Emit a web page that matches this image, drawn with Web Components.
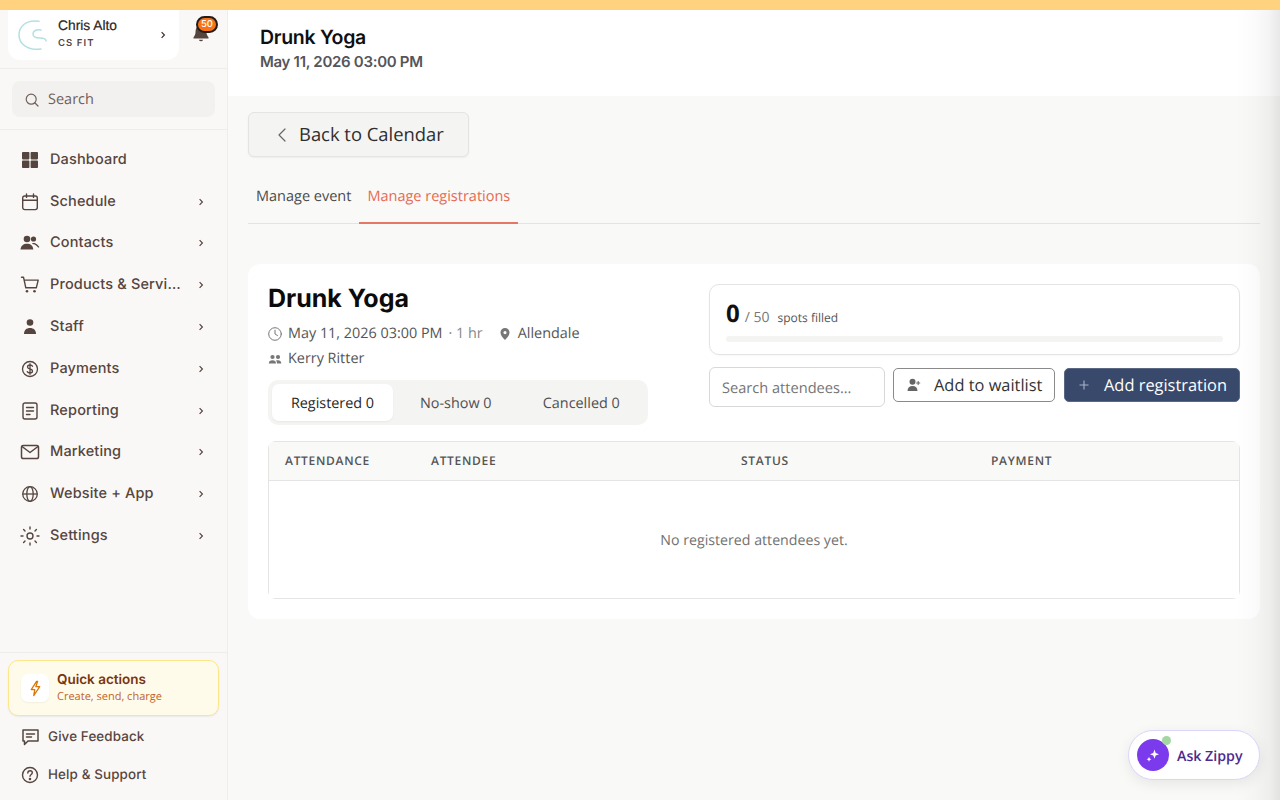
<!DOCTYPE html>
<html><head><meta charset="utf-8"><title>Drunk Yoga</title>
<style>
html,body{margin:0;height:100%;overflow:hidden;background:#f9f9f7;font-family:"Open Sans",sans-serif;text-rendering:geometricPrecision;-webkit-font-smoothing:antialiased}
app-shell{height:800px}
</style></head><body>
<app-shell>
  <side-bar slot="side"></side-bar>
  <page-header slot="head"></page-header>
  <event-page slot="main"></event-page>
  <ask-zippy slot="float"></ask-zippy>
</app-shell>
<script>
function def(name,html){customElements.define(name,class extends HTMLElement{
  connectedCallback(){ if(this.shadowRoot)return; const r=this.attachShadow({mode:'open'}); r.innerHTML=typeof html==='function'?html(this):html; }
});}
const chev=`<svg width="8" height="8" viewBox="0 0 8 8" fill="none" stroke="currentColor" stroke-width="1.2"><path d="M2.6 1.2 5.4 4 2.6 6.800"/></svg>`;

def('app-shell',`<style>
:host{display:grid;grid-template-columns:228px 1fr;grid-template-rows:86px 1fr;width:1280px;height:800px;padding-top:10px;box-sizing:border-box;position:relative;overflow:hidden}
.bar{position:absolute;left:0;right:0;top:0;height:10px;background:#ffd27f;z-index:3}
.side{grid-row:1/3;margin-top:-10px;display:flex;min-height:0}
.head{grid-column:2}
.main{grid-column:2;min-height:0}
.fade{position:absolute;right:0;top:10px;bottom:0;width:44px;background:linear-gradient(90deg,rgba(0,0,0,0),rgba(0,0,0,.015) 40%,rgba(0,0,0,.045) 75%,rgba(0,0,0,.09));pointer-events:none;z-index:1}
.float{position:absolute;right:20px;bottom:20px;z-index:2}
</style><div class="bar"></div><div class="side"><slot name="side"></slot></div><div class="head"><slot name="head"></slot></div><div class="main"><slot name="main"></slot></div><div class="fade"></div><div class="float"><slot name="float"></slot></div>`);

def('nav-item',el=>`<style>
:host{display:flex;align-items:center;height:41.8px;padding:0 20px;color:#56453f;font:450 14.5px/20px Inter,sans-serif;letter-spacing:.15px}
.i{width:20px;height:20px;margin-right:10px;display:flex;align-items:center;justify-content:center;flex:none}
.t{flex:1;white-space:nowrap;overflow:hidden;text-overflow:ellipsis}
.c{width:8px;height:8px;display:flex;margin-left:13px;margin-right:2px;flex:none}
</style><span class="i"><slot name="icon"></slot></span><span class="t"><slot></slot></span>${el.hasAttribute('more')?`<span class="c">${chev}</span>`:''}`);

def('side-bar',`<style>
:host{display:flex;flex-direction:column;width:228px;height:800px;box-sizing:border-box;background:#faf8f6;border-right:1px solid #efedea;color:#56453f;font-family:Inter,sans-serif}
.top{height:69px;box-sizing:border-box;border-bottom:1px solid #efedea;display:flex;padding:10px 8px 0;flex:none}
.acct{width:171px;height:50px;background:#fff;border-radius:0 0 12px 12px;display:flex;align-items:center;padding:0 12px 0 10px;box-sizing:border-box}
.logo{width:30px;height:30px;flex:none;margin-right:10px}
.who{flex:1;margin-top:-3px}
.n{font:500 13.800px/16px "Liberation Sans",sans-serif;color:#2b2523;-webkit-text-stroke:.2px #2b2523}
.o{font:600 9.500px/12px Inter,sans-serif;letter-spacing:1.100px;margin-top:4px;color:#56453f}
.c{width:8px;height:8px;display:flex;color:#3a302c}
.bell{position:relative;margin-left:12px;margin-top:13px;width:20px;height:20px;color:#56453f}
.badge{position:absolute;left:5px;top:-7px;width:22px;height:17px;border-radius:9px;background:#f97316;border:2px solid #241c18;box-sizing:border-box;color:#fff;font:500 9.500px/11px Inter,sans-serif;display:flex;align-items:center;justify-content:center}
.sw{padding:12px 12px;border-bottom:1px solid #efedea;flex:none;height:61px;box-sizing:border-box}
.search{height:36px;border-radius:8px;background:#f3f1ef;display:flex;align-items:center;padding:2px 13px 0;box-sizing:border-box;gap:9px;font:400 14.500px/20px "Open Sans",sans-serif;color:#6f605a}
nav{padding-top:9px;flex:1}
.foot{border-top:1px solid #efedea;padding:7px 8px 0;height:148px;box-sizing:border-box;flex:none}
.qa{height:56px;box-sizing:border-box;border:1px solid #fde68a;background:#fffbeb;border-radius:10px;display:flex;align-items:center;padding:0 12px;gap:8px;box-shadow:0 1px 2px rgba(0,0,0,.06)}
.qi{width:28px;height:28px;border-radius:7px;background:#fff;display:flex;align-items:center;justify-content:center;color:#d97706;box-shadow:0 1px 2px rgba(0,0,0,.05)}
.qx{padding-top:2px}
.qt{font:600 13.500px/16px Inter,sans-serif;color:#78350f;margin-top:-2px}
.qs{font:400 11px/14px "Open Sans",sans-serif;color:#c2632a;margin-top:2px}
.lk{display:flex;align-items:center;height:38px;padding-left:12px;gap:8px;font:450 13.400px/18px Inter,sans-serif;letter-spacing:.12px}
.qa + .lk{margin-top:2px}
</style>
<div class="top">
  <div class="acct">
    <svg class="logo" viewBox="0 0 30 30" fill="none" stroke="#b5e0e0" stroke-width="1.500" stroke-linecap="round"><path d="M21 1.300C8-1 1 7 1 15c0 9 9 16 22 14"/><path d="M23 10c-5-1-8 1-8 4s3 4 7 4 6 1 6 3"/></svg>
    <div class="who"><div class="n">Chris Alto</div><div class="o">CS FIT</div></div>
    <span class="c">${chev}</span>
  </div>
  <div class="bell"><svg width="20" height="20" viewBox="0 0 24 24" fill="currentColor"><path d="M12 3a6.500 6.500 0 0 0-6.500 6.500c0 4.500-1.300 6-2.500 7.500v1.500h18V17c-1.200-1.500-2.500-3-2.500-7.500A6.500 6.500 0 0 0 12 3z"/><path d="M9.500 20a2.600 2.600 0 0 0 5 0z"/></svg><span class="badge">50</span></div>
</div>
<div class="sw"><div class="search"><svg width="14" height="14" viewBox="0 0 14 14" fill="none" stroke="currentColor" stroke-width="1.200" stroke-linecap="round"><circle cx="6.200" cy="6.200" r="5"/><path d="M10 10l3 3"/></svg>Search</div></div>
<nav>
<nav-item><svg slot="icon" width="18" height="18" viewBox="0 0 18 18" fill="#56453f"><rect x="1" y="1" width="7.400" height="7.400" rx=".8"/><rect x="9.600" y="1" width="7.400" height="7.400" rx=".8"/><rect x="1" y="9.600" width="7.400" height="7.400" rx=".8"/><rect x="9.600" y="9.600" width="7.400" height="7.400" rx=".8"/></svg>Dashboard</nav-item>
<nav-item more><svg slot="icon" width="18" height="18" viewBox="0 0 18 18" fill="none" stroke="#56453f" stroke-width="1.400" stroke-linecap="round"><rect x="1.700" y="3" width="14.600" height="13.600" rx="2"/><path d="M1.700 7.200h14.600M5.500 1v3.400M12.500 1v3.400"/></svg>Schedule</nav-item>
<nav-item more><svg slot="icon" width="20" height="18" viewBox="0 0 20 18" fill="#56453f"><circle cx="7" cy="5" r="3.300"/><circle cx="13.500" cy="5" r="2.600"/><path d="M.5 15.500C.8 11.500 3.500 9.700 7 9.700s6 1.800 6.300 5.800z"/><path d="M12 9.300c2.300-.6 4 .2 5.200 1.300l2.200 2.500-.9.700-2.400-2.400c-1-.9-2-1.200-3.200-1.100z"/></svg>Contacts</nav-item>
<nav-item more><svg slot="icon" width="20" height="18" viewBox="0 0 20 18" fill="none" stroke="#56453f" stroke-width="1.400" stroke-linecap="round" stroke-linejoin="round"><path d="M1.500 1.200h2l2.300 10.600h10.500l1.900-7.700H4.300"/><circle cx="7" cy="15.300" r="1.300" fill="#56453f" stroke="none"/><circle cx="14.500" cy="15.300" r="1.300" fill="#56453f" stroke="none"/></svg>Products &amp; Services</nav-item>
<nav-item more><svg slot="icon" width="18" height="18" viewBox="0 0 18 18" fill="#56453f"><circle cx="9" cy="4.500" r="3.300"/><path d="M3 16c0-4 2.500-6 6-6s6 2 6 6z"/></svg>Staff</nav-item>
<nav-item more><svg slot="icon" width="18" height="18" viewBox="0 0 18 18" fill="none" stroke="#56453f" stroke-width="1.300" stroke-linecap="round"><circle cx="9" cy="9" r="7.500"/><path d="M11.500 6.300C11 5.300 10 5 9 5 7.700 5 6.500 5.600 6.500 7c0 2.700 5 1.300 5 4 0 1.300-1.200 2-2.500 2-1.100 0-2.200-.4-2.700-1.400M9 3.700v10.600"/></svg>Payments</nav-item>
<nav-item more><svg slot="icon" width="18" height="18" viewBox="0 0 18 18" fill="none" stroke="#56453f" stroke-width="1.400" stroke-linecap="round"><rect x="2" y="1" width="14" height="16" rx="2"/><path d="M5.500 5.500h7M5.500 9h7M5.500 12.500h3.500"/></svg>Reporting</nav-item>
<nav-item more><svg slot="icon" width="20" height="18" viewBox="0 0 20 18" fill="none" stroke="#56453f" stroke-width="1.500" stroke-linecap="round" stroke-linejoin="round"><rect x="1.500" y="2.500" width="17" height="13" rx="1.800"/><path d="M2 3.500l8 6 8-6"/></svg>Marketing</nav-item>
<nav-item more><svg slot="icon" width="18" height="18" viewBox="0 0 18 18" fill="none" stroke="#56453f" stroke-width="1.300"><circle cx="9" cy="9" r="7.300"/><ellipse cx="9" cy="9" rx="3.200" ry="7.300"/><path d="M1.700 9h14.600"/></svg>Website + App</nav-item>
<nav-item more><svg slot="icon" width="20" height="20" viewBox="0 0 20 20" fill="none" stroke="#56453f" stroke-width="1.400" stroke-linecap="round"><circle cx="10" cy="10" r="3"/><path d="M10 1v2M10 17v2M1 10h2M17 10h2M3.600 3.600 5 5M15 15l1.400 1.400M3.600 16.400 5 15M15 5l1.400-1.400"/></svg>Settings</nav-item>
</nav>
<div class="foot">
  <div class="qa"><span class="qi"><svg width="17" height="17" viewBox="0 0 24 24" fill="none" stroke="currentColor" stroke-width="1.800" stroke-linejoin="round"><path d="M13.500 2 6 13.500h5L9.500 22l8.500-12.500h-5.500L15 2z"/></svg></span><div class="qx"><div class="qt">Quick actions</div><div class="qs">Create, send, charge</div></div></div>
  <div class="lk"><svg width="20" height="20" viewBox="0 0 20 20" fill="none" stroke="#56453f" stroke-width="1.500" stroke-linejoin="round" stroke-linecap="round"><path d="M3 3h15v11H8l-3.500 3.500V14H3z"/><path d="M6.500 7h8M6.500 10h5"/></svg>Give Feedback</div>
  <div class="lk"><svg width="20" height="20" viewBox="0 0 20 20" fill="none" stroke="#56453f" stroke-width="1.400" stroke-linecap="round"><circle cx="10" cy="10" r="7.500"/><path d="M7.800 8c0-1.300 1-2.200 2.300-2.200s2.200.9 2.200 2c0 1.700-2.300 1.700-2.300 3.500"/><circle cx="10" cy="14" r=".6" fill="#56453f"/></svg>Help &amp; Support</div>
</div>`);

def('page-header',`<style>
:host{display:block;height:86px;box-sizing:border-box;background:#fff;padding:13px 32px 0}
.t{font:600 19.500px/28px Inter,sans-serif;color:#0f0f0f;letter-spacing:-.3px}
.d{font:600 15px/20px Inter,sans-serif;color:#55555a;margin-top:1px;letter-spacing:-.3px}
</style><div class="t">Drunk Yoga</div><div class="d">May 11, 2026 03:00 PM</div>`);

def('event-tabs',`<style>
:host{display:flex;height:67px;box-sizing:border-box;border-bottom:1px solid #e4e4e2;font:400 14.500px/20px "Open Sans",sans-serif;color:#4b4b4b}
span{display:block;padding:30px 8px 0;height:67px;box-sizing:border-box}
.a{color:#e56b55;border-bottom:2px solid #e57864}
</style><span>Manage event</span><span class="a">Manage registrations</span>`);

def('seg-tabs',`<style>
:host{display:flex;width:380px;height:45px;box-sizing:border-box;background:#f4f4f3;border-radius:10px;padding:4px;font:400 14.400px/20px "Open Sans",sans-serif;color:#4f4f4f}
span{flex:1;display:flex;align-items:center;justify-content:center;border-radius:7px;white-space:nowrap;padding-top:2px;box-sizing:border-box}
.a{background:#fff;color:#262626;flex:none;width:121px;box-shadow:0 1px 2px rgba(0,0,0,.05)}
</style><span class="a">Registered 0</span><span>No-show 0</span><span>Cancelled 0</span>`);

def('spots-card',`<style>
:host{display:block;height:71px;box-sizing:border-box;border:1px solid #e4e4e2;border-radius:10px;padding:12px 16px;background:#fff;box-shadow:0 1px 2px rgba(0,0,0,.03)}
.l{display:flex;align-items:baseline;height:34px;color:#6a6a6a}
b{font:700 24px/34px "Open Sans",sans-serif;color:#111;margin-right:5px}
.o{font-size:14px;margin-right:8px;color:#777}.s{font-size:12px;color:#555}
.p{height:6px;background:#f4f4f3;border-radius:3px;margin-top:5px}
</style><div class="l"><b>0</b><span class="o">/ 50</span><span class="s">spots filled</span></div><div class="p"></div>`);

def('attendee-table',`<style>
:host{display:block;height:158px;border-radius:8px;background:#fff;overflow:hidden}
.in{height:100%;box-sizing:border-box;border:1px solid #e4e4e2}
.h{display:grid;grid-template-columns:146px 310px 250px 1fr;height:39px;box-sizing:border-box;align-items:center;background:#f9f9f7;border-bottom:1px solid #e4e4e2;padding-left:16px;font:600 12px/16px "Open Sans",sans-serif;letter-spacing:.7px;color:#555}
.e{height:117px;box-sizing:border-box;padding-top:2px;display:flex;align-items:center;justify-content:center;font:400 14.200px/20px "Open Sans",sans-serif;color:#717171}
</style><div class="in"><div class="h"><span>ATTENDANCE</span><span>ATTENDEE</span><span>STATUS</span><span>PAYMENT</span></div><div class="e">No registered attendees yet.</div></div>`);

def('event-page',`<style>
:host{display:block;box-sizing:border-box;padding:16px 20px;color:#333;font-family:"Open Sans",sans-serif}
.back{width:221px;height:45px;box-sizing:border-box;border:1px solid #e4e4e2;border-radius:6px;background:#f4f4f3;display:flex;align-items:center;padding:0 0 0 27px;gap:11px;font:400 18.400px/24px "Open Sans",sans-serif;color:#2e2e2e;box-shadow:0 1px 2px rgba(0,0,0,.05)}
.card{margin-top:40px;background:#fff;border-radius:12px;padding:20px;height:355px;box-sizing:border-box}
.top{display:grid;grid-template-columns:1fr 531px;height:141px;margin-bottom:16px}
h1{margin:0;font:700 25px/30px Inter,sans-serif;color:#0b0b0b}
.m{display:flex;align-items:center;font-size:14.400px;line-height:20px;color:#555;height:25px}
.m svg{margin-right:6px;flex:none;color:#777}
.dur{color:#888;margin-left:6px;margin-right:15px}
seg-tabs{margin-top:9px}
.r{display:flex;flex-direction:column}
.acts{display:flex;align-items:flex-start;margin-top:12px}
.inp{width:176px;height:40px;box-sizing:border-box;border:1px solid #d8d8d8;border-radius:6px;padding:2px 12px 0;display:flex;align-items:center;font-size:14.600px;color:#757575;margin-right:8px}
.btn{height:34px;margin-top:1px;box-sizing:border-box;border-radius:5px;display:flex;align-items:center;font:400 16.400px/20px "Open Sans",sans-serif;white-space:nowrap}
.w{width:162px;border:1px solid #8a8a8a;color:#333;padding-left:13px;gap:13px;margin-right:9px}
.g{width:176px;background:#38496b;color:#fff;padding-left:12px;gap:13px;border:1px solid #5a6883}
</style>
<div class="back"><svg width="12" height="16" viewBox="0 0 12 16" fill="none" stroke="#666" stroke-width="1.200" stroke-linecap="round" stroke-linejoin="round"><path d="M9 2 3 8l6 6"/></svg>Back to Calendar</div>
<event-tabs></event-tabs>
<div class="card">
 <div class="top">
  <div>
    <h1>Drunk Yoga</h1>
    <div class="m" style="margin-top:7px"><svg width="14" height="14" viewBox="0 0 14 14" fill="none" stroke="currentColor" stroke-width="1" stroke-linecap="round"><circle cx="7" cy="7" r="6.300"/><path d="M7 3.200V7l2.500 1.600"/></svg>May 11, 2026 03:00 PM<span class="dur">· 1 hr</span><svg width="14" height="14" viewBox="0 0 14 14" fill="currentColor" style="margin-right:6px"><path fill-rule="evenodd" d="M7 1a4.500 4.500 0 0 0-4.500 4.500C2.500 9 7 13 7 13s4.500-4 4.500-7.500A4.500 4.500 0 0 0 7 1zm0 3a1.600 1.600 0 1 1 0 3.200A1.600 1.600 0 0 1 7 4z"/></svg>Allendale</div>
    <div class="m"><svg width="14" height="14" viewBox="0 0 14 14" fill="currentColor"><circle cx="4.500" cy="5" r="2.100"/><circle cx="10" cy="5" r="2.100"/><path d="M.8 11.500c0-2 1.500-3.200 3.700-3.200s3.500 1.200 3.500 3.200zM9 11.500c0-1.200-.3-2.200-1-3 .6-.2 1.300-.3 2-.3 2 0 3.300 1.200 3.300 3.300z"/></svg>Kerry Ritter</div>
    <seg-tabs></seg-tabs>
  </div>
  <div class="r">
    <spots-card></spots-card>
    <div class="acts">
      <div class="inp">Search attendees...</div>
      <div class="btn w"><svg width="14" height="14" viewBox="0 0 14 14" fill="#666"><circle cx="5.500" cy="3.700" r="3"/><path d="M.5 13c0-3.400 2-5 5-5s5 1.600 5 5z"/><path d="M11.200 3v4M9.200 5h4" stroke="#666" stroke-width="1"/></svg>Add to waitlist</div>
      <div class="btn g"><svg width="14" height="14" viewBox="0 0 14 14" stroke="#a9b4c8" stroke-width="1.100"><path d="M7 2.500v9M2.500 7h9"/></svg>Add registration</div>
    </div>
  </div>
 </div>
 <attendee-table></attendee-table>
</div>`);

def('ask-zippy',`<style>
:host{display:flex;align-items:center;width:132px;height:50px;box-sizing:border-box;border:1px solid #dcd5fb;border-radius:25px;background:#fff;padding-left:8px;gap:8px;box-shadow:0 4px 14px rgba(0,0,0,.08);position:relative;font:600 14.200px/20px "Open Sans",sans-serif;color:#4c2a8f}
.c{width:32px;height:32px;border-radius:50%;background:#7c3aed;display:flex;align-items:center;justify-content:center;position:relative}
.d{position:absolute;right:-2px;top:-3px;width:9px;height:9px;border-radius:50%;background:#a3d6a0}
.t{padding-top:3px}
</style><span class="c"><svg width="14" height="14" viewBox="0 0 14 14" fill="#fff"><path d="M8.500 1.500 9.700 5 13 6.200 9.700 7.400 8.500 10.800 7.300 7.400 4 6.200 7.300 5z"/><path d="M3 8.800l.7 1.700 1.700.7-1.700.7L3 13.800l-.7-1.900-1.700-.7 1.700-.7z"/></svg><span class="d"></span></span><span class="t">Ask Zippy</span>`);
</script>
</body></html>
